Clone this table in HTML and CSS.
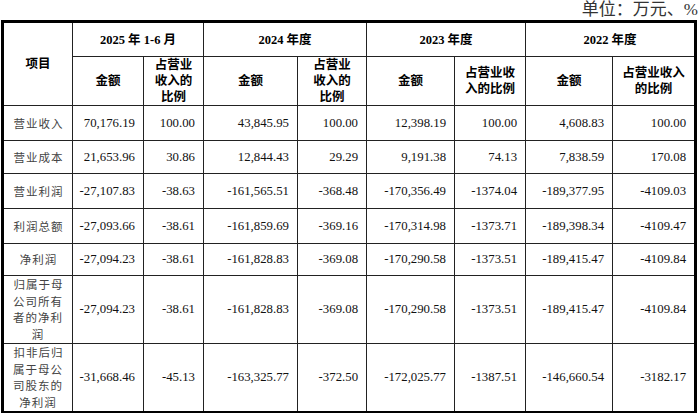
FILE: index.html
```html
<!DOCTYPE html>
<html lang="zh">
<head>
<meta charset="utf-8">
<link rel="stylesheet" href="styles.css">
</head>
<body>
<div class="page">
  <div class="unit">单位：万元、%</div>
  <table class="fin">
    <colgroup>
      <col class="c0"><col class="c1"><col class="c2"><col class="c3"><col class="c4"><col class="c5"><col class="c6"><col class="c7"><col class="c8">
    </colgroup>
    <thead>
      <tr class="r-year">
        <th rowspan="2" class="hd">项目</th>
        <th colspan="2" class="hd">2025 年 1-6 月</th>
        <th colspan="2" class="hd">2024 年度</th>
        <th colspan="2" class="hd">2023 年度</th>
        <th colspan="2" class="hd last">2022 年度</th>
      </tr>
      <tr class="r-sub">
        <th class="hd">金额</th>
        <th class="hd">占营业<br>收入的<br>比例</th>
        <th class="hd">金额</th>
        <th class="hd">占营业<br>收入的<br>比例</th>
        <th class="hd">金额</th>
        <th class="hd">占营业收<br>入的比例</th>
        <th class="hd">金额</th>
        <th class="hd last">占营业收入<br>的比例</th>
      </tr>
    </thead>
    <tbody>
      <tr class="r-a">
        <td class="lbl">营业收入</td>
        <td class="num">70,176.19</td><td class="num">100.00</td>
        <td class="num">43,845.95</td><td class="num">100.00</td>
        <td class="num">12,398.19</td><td class="num">100.00</td>
        <td class="num">4,608.83</td><td class="num last">100.00</td>
      </tr>
      <tr class="r-b">
        <td class="lbl">营业成本</td>
        <td class="num">21,653.96</td><td class="num">30.86</td>
        <td class="num">12,844.43</td><td class="num">29.29</td>
        <td class="num">9,191.38</td><td class="num">74.13</td>
        <td class="num">7,838.59</td><td class="num last">170.08</td>
      </tr>
      <tr class="r-a">
        <td class="lbl">营业利润</td>
        <td class="num">-27,107.83</td><td class="num">-38.63</td>
        <td class="num">-161,565.51</td><td class="num">-368.48</td>
        <td class="num">-170,356.49</td><td class="num">-1374.04</td>
        <td class="num">-189,377.95</td><td class="num last">-4109.03</td>
      </tr>
      <tr class="r-a">
        <td class="lbl">利润总额</td>
        <td class="num">-27,093.66</td><td class="num">-38.61</td>
        <td class="num">-161,859.69</td><td class="num">-369.16</td>
        <td class="num">-170,314.98</td><td class="num">-1373.71</td>
        <td class="num">-189,398.34</td><td class="num last">-4109.47</td>
      </tr>
      <tr class="r-c">
        <td class="lbl">净利润</td>
        <td class="num">-27,094.23</td><td class="num">-38.61</td>
        <td class="num">-161,828.83</td><td class="num">-369.08</td>
        <td class="num">-170,290.58</td><td class="num">-1373.51</td>
        <td class="num">-189,415.47</td><td class="num last">-4109.84</td>
      </tr>
      <tr class="r-d">
        <td class="lbl">归属于母<br>公司所有<br>者的净利<br>润</td>
        <td class="num">-27,094.23</td><td class="num">-38.61</td>
        <td class="num">-161,828.83</td><td class="num">-369.08</td>
        <td class="num">-170,290.58</td><td class="num">-1373.51</td>
        <td class="num">-189,415.47</td><td class="num last">-4109.84</td>
      </tr>
      <tr class="r-e bottom">
        <td class="lbl">扣非后归<br>属于母公<br>司股东的<br>净利润</td>
        <td class="num">-31,668.46</td><td class="num">-45.13</td>
        <td class="num">-163,325.77</td><td class="num">-372.50</td>
        <td class="num">-172,025.77</td><td class="num">-1387.51</td>
        <td class="num">-146,660.54</td><td class="num last">-3182.17</td>
      </tr>
    </tbody>
  </table>
</div>
</body>
</html>
```
FILE: styles.css
```css
* { box-sizing: border-box; }
html, body { margin: 0; padding: 0; background: #fff; }
.page { width: 700px; }
.unit {
  width: 698px;
  height: 20px;
  line-height: 20px;
  text-align: right;
  font-family: "Liberation Serif", "Noto Sans CJK SC", serif;
  font-size: 17px;
  color: #333;
}
.fin {
  margin-left: 1px;
  width: 696px;
  table-layout: fixed;
  border-collapse: separate;
  border-spacing: 0;
  border: 3px solid #000;
}
.c0 { width: 69px; }
.c1 { width: 71px; }
.c2 { width: 60px; }
.c3 { width: 94px; }
.c4 { width: 69px; }
.c5 { width: 88px; }
.c6 { width: 71px; }
.c7 { width: 87px; }
.c8 { width: 81px; }
.fin th, .fin td {
  padding: 0;
  border-right: 1px solid #222;
  border-bottom: 1px solid #222;
  vertical-align: middle;
}
.fin .last { border-right: none; }
.fin .bottom td { border-bottom: none; }
.hd {
  font-family: "Liberation Serif", "Noto Sans CJK SC", serif;
  font-weight: 700;
  font-size: 12.5px;
  line-height: 16px;
  color: #000;
  text-align: center;
}
.r-year { height: 34px; }
.r-sub { height: 49px; }
.r-a { height: 35px; }
.r-b { height: 33px; }
.r-c { height: 32px; }
.r-d { height: 67px; }
.r-e { height: 63px; }
.lbl {
  font-family: "Noto Sans CJK SC", sans-serif;
  font-size: 11.5px;
  letter-spacing: 1px;
  text-indent: 1px;
  line-height: 16.7px;
  color: #444;
  text-align: center;
}
.num {
  font-family: "Liberation Serif", serif;
  font-size: 12.8px;
  color: #111;
  text-align: right;
  padding-right: 8px !important;
}
```
